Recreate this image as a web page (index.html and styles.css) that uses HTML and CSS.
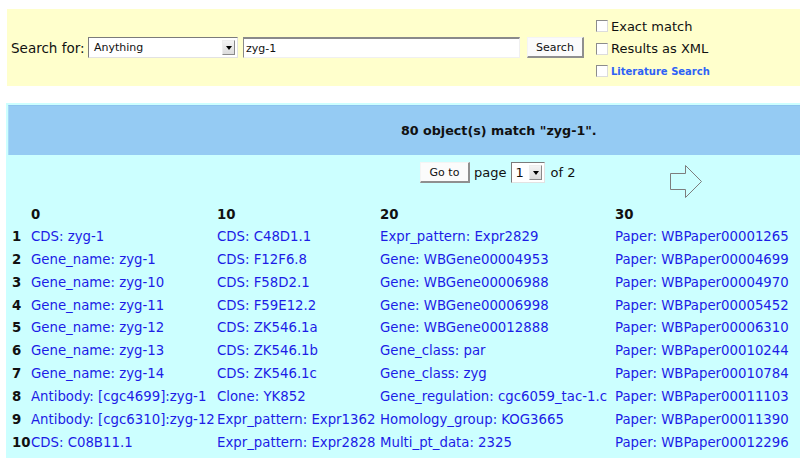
FILE: index.html
```html
<!DOCTYPE html>
<html>
<head>
<meta charset="utf-8">
<link rel="stylesheet" href="styles.css">
</head>
<body>
<form class="search">
  <span class="label">Search for:</span>
  <span class="select wide"><span class="sel-text">Anything</span><span class="sel-arrow"><i></i></span></span>
  <span class="textbox">zyg-1</span>
  <span class="btn search-btn">Search</span>
  <div class="opts">
    <div class="opt"><span class="cb"></span>Exact match</div>
    <div class="opt"><span class="cb"></span>Results as XML</div>
    <div class="opt lit"><span class="cb"></span><a href="#">Literature Search</a></div>
  </div>
</form>

<div class="results">
  <div class="band">80 object(s) match "zyg-1".</div>
  <div class="nav">
    <div class="pager">
      <span class="btn goto">Go to</span>
      <span class="word">page</span>
      <span class="select small"><span class="sel-text">1</span><span class="sel-arrow"><i></i></span></span>
      <span class="word">of 2</span>
    </div>
    <svg class="next" width="33" height="33" viewBox="0 0 33 33">
      <path d="M0.5 8.5 H15.5 V0.5 L31.5 16.5 L15.5 32.5 V24.5 H0.5 Z" fill="none" stroke="#7d7d7d" stroke-width="1"/>
    </svg>
  </div>
  <div class="grid">
    <span class="h"></span><span class="h">0</span><span class="h">10</span><span class="h">20</span><span class="h">30</span>

    <span class="n">1</span><a href="#">CDS: zyg-1</a><a href="#">CDS: C48D1.1</a><a href="#">Expr_pattern: Expr2829</a><a href="#">Paper: WBPaper00001265</a>
    <span class="n">2</span><a href="#">Gene_name: zyg-1</a><a href="#">CDS: F12F6.8</a><a href="#">Gene: WBGene00004953</a><a href="#">Paper: WBPaper00004699</a>
    <span class="n">3</span><a href="#">Gene_name: zyg-10</a><a href="#">CDS: F58D2.1</a><a href="#">Gene: WBGene00006988</a><a href="#">Paper: WBPaper00004970</a>
    <span class="n">4</span><a href="#">Gene_name: zyg-11</a><a href="#">CDS: F59E12.2</a><a href="#">Gene: WBGene00006998</a><a href="#">Paper: WBPaper00005452</a>
    <span class="n">5</span><a href="#">Gene_name: zyg-12</a><a href="#">CDS: ZK546.1a</a><a href="#">Gene: WBGene00012888</a><a href="#">Paper: WBPaper00006310</a>
    <span class="n">6</span><a href="#">Gene_name: zyg-13</a><a href="#">CDS: ZK546.1b</a><a href="#">Gene_class: par</a><a href="#">Paper: WBPaper00010244</a>
    <span class="n">7</span><a href="#">Gene_name: zyg-14</a><a href="#">CDS: ZK546.1c</a><a href="#">Gene_class: zyg</a><a href="#">Paper: WBPaper00010784</a>
    <span class="n">8</span><a href="#">Antibody: [cgc4699]:zyg-1</a><a href="#">Clone: YK852</a><a href="#">Gene_regulation: cgc6059_tac-1.c</a><a href="#">Paper: WBPaper00011103</a>
    <span class="n">9</span><a href="#">Antibody: [cgc6310]:zyg-12</a><a href="#">Expr_pattern: Expr1362</a><a href="#">Homology_group: KOG3665</a><a href="#">Paper: WBPaper00011390</a>
    <span class="n">10</span><a href="#">CDS: C08B11.1</a><a href="#">Expr_pattern: Expr2828</a><a href="#">Multi_pt_data: 2325</a><a href="#">Paper: WBPaper00012296</a>
  </div>
</div>
</body>
</html>
```

FILE: styles.css
```css
html, body {
  margin: 0;
  padding: 0;
  overflow: hidden;
  background: #ffffff;
  font-family: "DejaVu Sans", Verdana, sans-serif;
  color: #111;
}

.search {
  margin: 9px 0 0 7px;
  height: 77px;
  background: #ffffcc;
  display: flex;
  align-items: center;
  padding-left: 4px;
  box-sizing: border-box;
}

.label {
  font-size: 13.5px;
  width: 77px;
}

.select {
  display: inline-flex;
  align-items: center;
  justify-content: space-between;
  height: 21px;
  box-sizing: border-box;
  background: #fff;
  border: 1px solid;
  border-color: #7b7b7b #e2e2e2 #e2e2e2 #7b7b7b;
  padding: 0 2px 0 5px;
  font-size: 11px;
  color: #111;
}
.select.wide { width: 150px; margin-right: 5px; }
.select.small { width: 34px; padding-left: 3px; font-size: 13px; }

.sel-arrow {
  width: 13px;
  height: 15px;
  box-sizing: border-box;
  background: linear-gradient(#f4f4f4, #dcdcdc);
  border: 1px solid;
  border-color: #eee #8a8a8a #8a8a8a #eee;
  display: flex;
  align-items: center;
  justify-content: center;
}
.sel-arrow i {
  width: 0;
  height: 0;
  border-left: 3px solid transparent;
  border-right: 3px solid transparent;
  border-top: 4px solid #000;
}

.textbox {
  width: 277px;
  height: 21px;
  box-sizing: border-box;
  background: #fff;
  border: 1px solid;
  border-top-width: 2px;
  border-color: #8a8a8a #f0f0f0 #f0f0f0 #8a8a8a;
  font-size: 11px;
  padding-left: 2px;
  display: inline-flex;
  align-items: center;
  margin-right: 7px;
}

.btn {
  display: inline-flex;
  align-items: center;
  justify-content: center;
  height: 21px;
  box-sizing: border-box;
  background: #fbfbfb;
  border: 1px solid;
  border-color: #f4f4f4 #8f8f8f #8f8f8f #f4f4f4;
  border-right-width: 2px;
  border-bottom-width: 2px;
  font-size: 11px;
  color: #111;
}
.search-btn { width: 57px; margin-right: 12px; }

.opts {
  display: flex;
  flex-direction: column;
  margin-top: 2px;
}
.opt {
  display: flex;
  align-items: center;
  height: 22.5px;
  font-size: 13px;
}
.cb {
  width: 12px;
  height: 12px;
  box-sizing: border-box;
  background: #fff;
  border: 1px solid;
  border-color: #8c8c8c #dcdcdc #dcdcdc #8c8c8c;
  margin-right: 3px;
}
.opt.lit a {
  color: #2e62f6;
  font-weight: bold;
  font-size: 10px;
  text-decoration: none;
}

.results {
  margin: 17px 0 0 6px;
  background: #ccffff;
  padding: 2px 0 4px 2px;
}

.band {
  height: 50px;
  box-sizing: border-box;
  background: #95cbf3;
  border-top: 1px solid #8cc3ee;
  border-left: 1px solid #a6d9f6;
  display: flex;
  align-items: center;
  padding-left: 392px;
  font-weight: bold;
  font-size: 12.7px;
  color: #111;
}

.nav {
  height: 49px;
  box-sizing: border-box;
  display: flex;
  align-items: flex-start;
  padding: 7px 0 0 412px;
}
.pager {
  width: 250px;
  display: flex;
  align-items: center;
}
.goto { width: 50px; margin-right: 4px; }
.word { font-size: 13px; margin-right: 5px; }
.select.small { margin-right: 5px; }
.next { margin-top: 3px; }

.grid {
  display: grid;
  grid-template-columns: 19px 186px 163px 235px 200px;
  grid-template-rows: 21px repeat(10, 22.86px);
  align-items: center;
  padding-left: 4px;
  font-size: 13.3px;
}
.grid .h, .grid .n {
  font-weight: bold;
  color: #111;
}
.grid a {
  color: #1c1ce6;
  text-decoration: none;
  white-space: nowrap;
  overflow: hidden;
}
```
